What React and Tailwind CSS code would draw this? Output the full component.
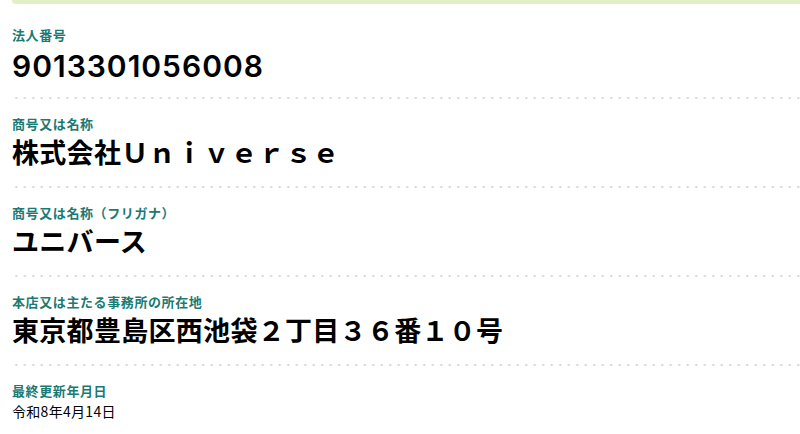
import React from "react"

const items = [
    { label: "法人番号", value: "9013301056008", kind: "number" },
    { label: "商号又は名称", value: "株式会社Ｕｎｉｖｅｒｓｅ" },
    { label: "商号又は名称（フリガナ）", value: "ユニバース" },
    { label: "本店又は主たる事務所の所在地", value: "東京都豊島区西池袋２丁目３６番１０号" },
]

// dotted separator between rows
const Dots = () => (
    <div className="h-[2px] w-full bg-[radial-gradient(circle,#d6d6d6_0.9px,transparent_1.3px)] bg-[length:8.5px_2px] bg-repeat-x" />
)

const Row = ({ label, value, kind }) => (
    <div>
        <div className={kind === "number" ? "pt-[17px] pb-[14px]" : "pt-[17px] pb-[17px]"}>
            <p className="text-[13px] leading-[16px] font-bold tracking-[0.6px] text-[#1b7a73]">{label}</p>
            {kind === "number" ? (
                <p className="mt-[6px] font-['Inter'] text-[30px] leading-[34px] font-semibold text-black tracking-[1px]">
                    {value}
                </p>
            ) : (
                <p className="mt-[3px] text-[27px] leading-[34px] font-bold text-black tracking-[0.3px]">{value}</p>
            )}
        </div>
        <Dots />
    </div>
)

export default function App() {
    return (
        <div
            className="w-[800px] h-[434px] overflow-hidden bg-white"
            style={{ fontFamily: '"Noto Sans CJK JP", "Noto Sans", sans-serif' }}
        >
            <div className="ml-[12px] h-[4px] rounded-bl-[4px] bg-[#e1f1c4]" />
            <div className="pl-[12px] pt-[6px]">
                {items.map((it) => (
                    <Row key={it.label} {...it} />
                ))}
                <div className="pt-[17px]">
                    <p className="text-[13px] leading-[16px] font-bold tracking-[0.6px] text-[#1b7a73]">最終更新年月日</p>
                    <p className="mt-[2px] text-[14px] leading-[20px] tracking-[0.3px] text-black">令和8年4月14日</p>
                </div>
            </div>
        </div>
    )
}
